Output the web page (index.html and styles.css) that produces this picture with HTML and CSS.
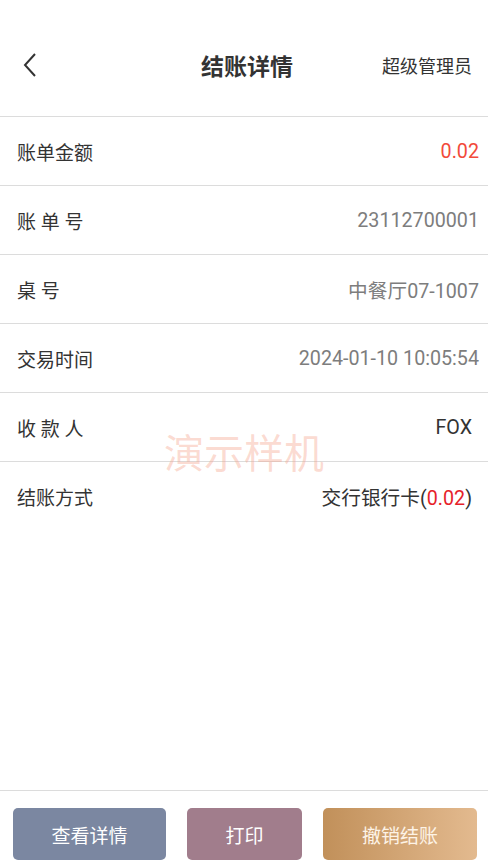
FILE: index.html
```html
<!DOCTYPE html>
<html>
  <head>
    <title>结账详情</title>
    <meta name="viewport" content="width=device-width, initial-scale=1" />
    <link rel="stylesheet" href="styles.css">
  </head>
  <body>
    <div class="page">
      <header class="topbar">
        <span class="back">
          <svg width="16" height="26" viewBox="0 0 16 26">
            <path d="M13 2 L3 13 L13 24" fill="none" stroke="#333" stroke-width="2" />
          </svg>
        </span>
        <h1 class="title">结账详情</h1>
        <span class="user">超级管理员</span>
      </header>

      <div class="rows">
        <div class="row">
          <span class="label">账单金额</span>
          <span class="value red">0.02</span>
        </div>
        <div class="row">
          <span class="label">账 单 号</span>
          <span class="value">23112700001</span>
        </div>
        <div class="row">
          <span class="label">桌 号</span>
          <span class="value">中餐厅07-1007</span>
        </div>
        <div class="row">
          <span class="label">交易时间</span>
          <span class="value">2024-01-10 10:05:54</span>
        </div>
        <div class="row">
          <span class="label">收 款 人</span>
          <span class="value dark inset">FOX</span>
        </div>
        <div class="row last">
          <span class="label">结账方式</span>
          <span class="value dark inset">交行银行卡(<em class="amount">0.02</em>)</span>
        </div>
        <div class="watermark">演示样机</div>
      </div>

      <div class="spacer"></div>

      <footer class="actions">
        <button class="btn btn-detail" type="button">查看详情</button>
        <button class="btn btn-print" type="button">打印</button>
        <button class="btn btn-cancel" type="button">撤销结账</button>
      </footer>
    </div>
  </body>
</html>
```

FILE: styles.css
```css
body {
  margin: 0;
  background: #fff;
  font-family: Roboto, "Noto Sans CJK SC", sans-serif;
  color: #333;
}

.page {
  display: flex;
  flex-direction: column;
  width: 488px;
  min-height: 867px;
}

.topbar {
  display: flex;
  align-items: center;
  justify-content: space-between;
  box-sizing: border-box;
  height: 117px;
  padding: 14px 16px 0 22px;
  border-bottom: 1px solid #dcdcdc;
}

.back {
  display: flex;
  width: 100px;
}

.title {
  margin: 0;
  font-size: 23px;
  font-weight: bold;
  color: #333;
}

.user {
  width: 100px;
  text-align: right;
  font-size: 18px;
  color: #333;
  white-space: nowrap;
}

.rows {
  position: relative;
}

.row {
  display: flex;
  align-items: center;
  justify-content: space-between;
  height: 68px;
  padding: 0 9px 0 17px;
  border-bottom: 1px solid #dcdcdc;
}

.row.last {
  border-bottom: none;
}

.label {
  font-size: 19px;
  color: #333;
  white-space: pre;
}

.value {
  font-size: 19.7px;
  color: #7d7d7d;
}

.value.red {
  color: #f24a3a;
}

.value.dark {
  color: #333;
}

.value.inset {
  margin-right: 7px;
}

.amount {
  font-style: normal;
  color: #e61e2a;
}

.watermark {
  position: absolute;
  left: 0;
  right: 0;
  top: 305px;
  text-align: center;
  font-size: 40px;
  color: rgba(245, 160, 135, 0.38);
  pointer-events: none;
}

.spacer {
  flex: 1;
}

.actions {
  display: flex;
  gap: 21px;
  padding: 17px 11px 7px 13px;
  border-top: 1px solid #dcdcdc;
}

.btn {
  height: 52px;
  border: none;
  border-radius: 5px;
  font-family: "Noto Sans CJK SC", sans-serif;
  font-size: 19px;
  color: #fff;
}

.btn-detail {
  width: 153px;
  background: #7b87a1;
}

.btn-print {
  width: 115px;
  background: #a17d8c;
}

.btn-cancel {
  width: 154px;
  background: linear-gradient(to right, #c1905a, #e3ba8f);
  color: #fdf3e6;
}
```
